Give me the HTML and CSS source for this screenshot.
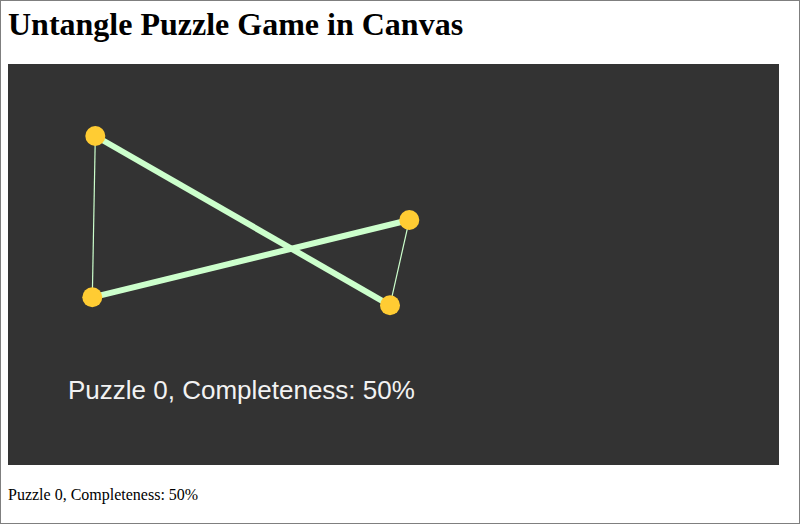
FILE: index.html
```html
<!DOCTYPE html>
<html>
<head>
<meta charset="utf-8">
<title>Untangle Puzzle Game in Canvas</title>
<link rel="stylesheet" href="styles.css">
</head>
<body>
<div class="frame">
  <h1 class="title">Untangle Puzzle Game in Canvas</h1>
  <div class="game">
    <svg class="board" width="771" height="401" viewBox="0 0 771 401" xmlns="http://www.w3.org/2000/svg">
      <g stroke="#ccffcc" stroke-linecap="butt">
        <line x1="87.3" y1="72" x2="84.3" y2="233.3" stroke-width="1.2"/>
        <line x1="401.3" y1="156" x2="382" y2="241.3" stroke-width="1.2"/>
        <line x1="87.3" y1="72" x2="382" y2="241.3" stroke-width="6"/>
        <line x1="84.3" y1="233.3" x2="401.3" y2="156" stroke-width="6"/>
      </g>
      <g fill="#ffcc33">
        <circle cx="87.3" cy="72" r="10"/>
        <circle cx="84.3" cy="233.3" r="10"/>
        <circle cx="401.3" cy="156" r="10"/>
        <circle cx="382" cy="241.3" r="10"/>
      </g>
      <text class="board-text" x="60" y="335">Puzzle 0, Completeness: 50%</text>
    </svg>
  </div>
  <p class="status">Puzzle 0, Completeness: 50%</p>
</div>
</body>
</html>
```
FILE: styles.css
```css
html, body {
  margin: 0;
  padding: 0;
  background: #ffffff;
}
.frame {
  box-sizing: border-box;
  width: 800px;
  height: 524px;
  border: 1px solid #7f7f7f;
  padding: 0 7px;
  font-family: "Liberation Serif", "Times New Roman", serif;
  color: #000;
  overflow: hidden;
}
.title {
  font-family: "Liberation Serif", "Times New Roman", serif;
  font-size: 32px;
  font-weight: bold;
  margin: 4.5px 0 21.5px;
  line-height: normal;
}
.game {
  width: 771px;
  height: 401px;
  background: #333333;
}
.board {
  display: block;
}
.board-text {
  font-family: "Liberation Sans", Arial, sans-serif;
  font-size: 26px;
  fill: #f2f2f2;
}
.status {
  margin: 20.5px 0 0;
  font-size: 16px;
  line-height: normal;
}
```
